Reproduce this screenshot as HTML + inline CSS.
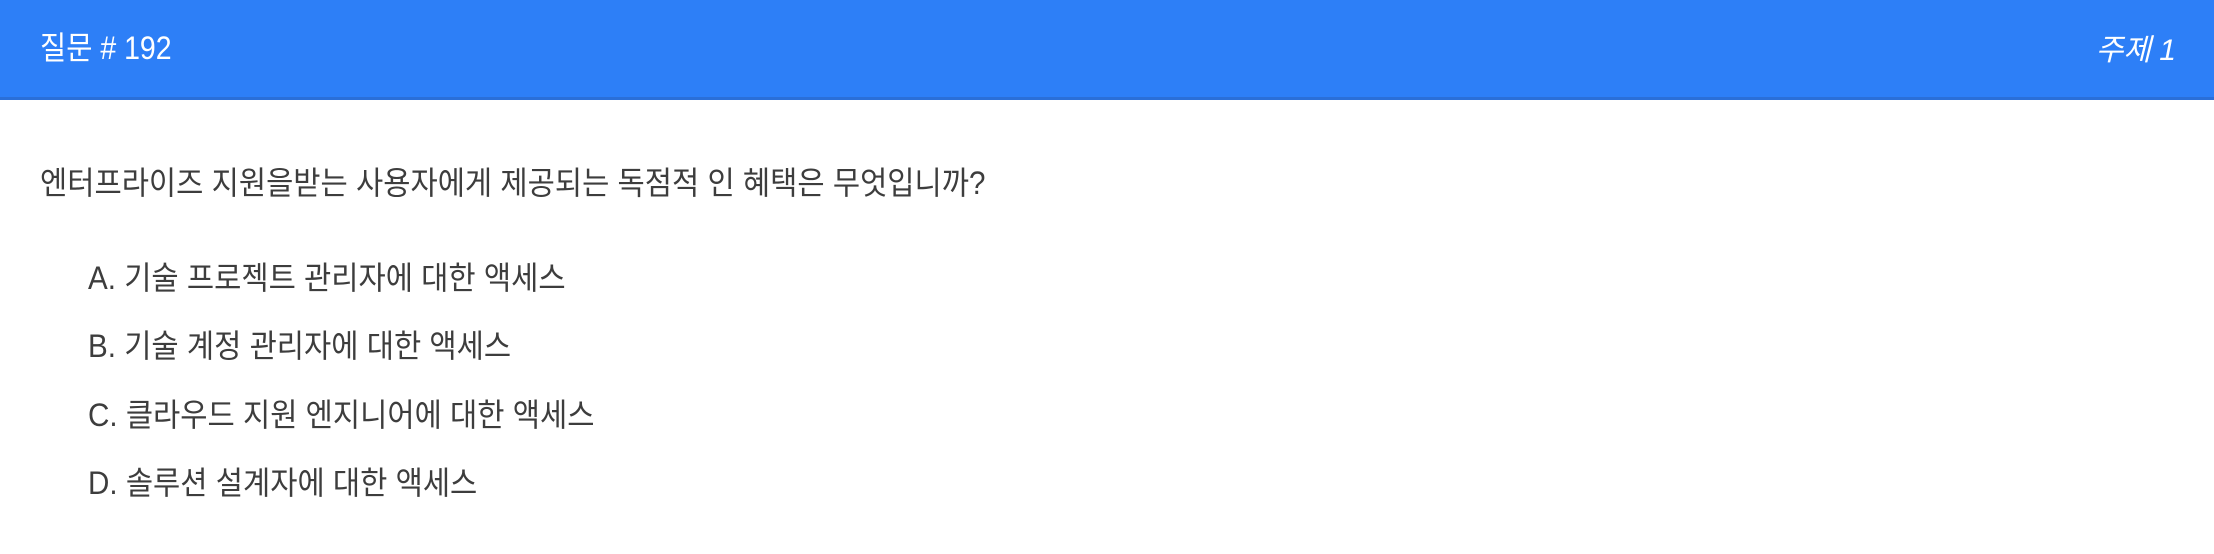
<!DOCTYPE html>
<html><head><meta charset="utf-8"><style>
body{margin:0;width:2214px;height:554px;background:#fff;overflow:hidden;font-family:"Liberation Sans","Noto Sans CJK KR",sans-serif;}
.hd{position:absolute;left:0;top:0;width:2214px;height:97px;background:#2d7ff7;border-bottom:3px solid #2a6fd8;}
.t{position:absolute;left:40px;top:23px;color:#fff;font-size:32px;transform:scaleX(0.89);transform-origin:left;white-space:nowrap;}
.r{position:absolute;right:38px;top:25px;color:#fff;font-size:30px;font-style:italic;white-space:nowrap;}
.q,.o{position:absolute;color:#3d3d3d;font-size:32px;transform:scaleX(0.925);transform-origin:left;white-space:nowrap;}
.q{left:40px;top:158px;}
</style></head><body>
<div class="hd"><div class="t">질문 # 192</div><div class="r">주제 1</div></div>
<div class="q">엔터프라이즈 지원을받는 사용자에게 제공되는 독점적 인 혜택은 무엇입니까?</div>
<div class="o" style="left:88px;top:253px">A. 기술 프로젝트 관리자에 대한 액세스</div>
<div class="o" style="left:88px;top:321px">B. 기술 계정 관리자에 대한 액세스</div>
<div class="o" style="left:88px;top:390px">C. 클라우드 지원 엔지니어에 대한 액세스</div>
<div class="o" style="left:88px;top:458px">D. 솔루션 설계자에 대한 액세스</div>
</body></html>
